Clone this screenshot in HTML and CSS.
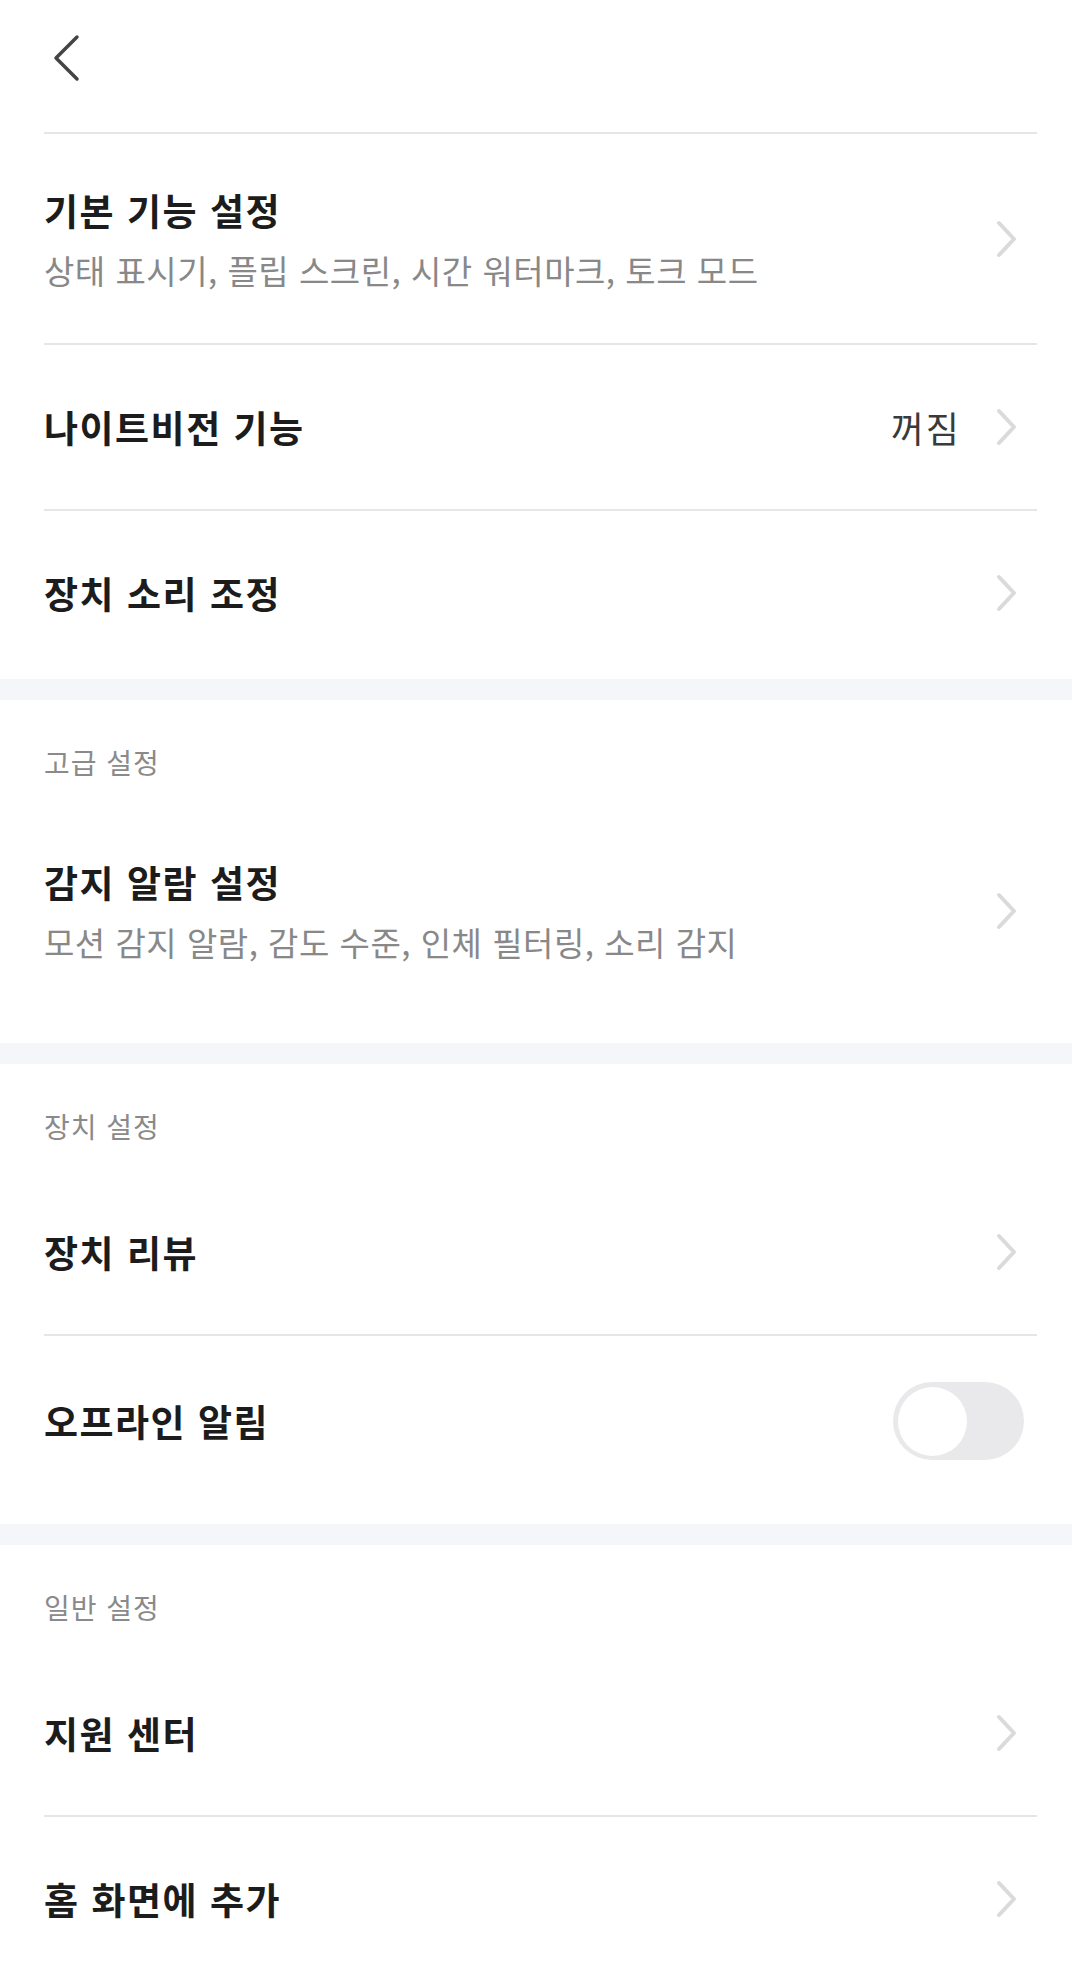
FILE: index.html
```html
<!DOCTYPE html>
<html lang="ko">

<head>
    <meta charset="UTF-8" />
    <meta name="viewport" content="width=device-width, initial-scale=1.0" />
    <title>설정</title>
    <link rel="stylesheet" href="styles.css">
</head>

<body>
    <div class="page">
        <!-- 상단 바 -->
        <div class="header">
            <svg class="back" width="30" height="50" viewBox="0 0 30 50">
                <path d="M25 3 L4 24 L25 45" />
            </svg>
        </div>

        <!-- 기본 -->
        <div class="section first">
            <div class="row double">
                <div class="text">
                    <div class="title">기본 기능 설정</div>
                    <div class="sub">상태 표시기, 플립 스크린, 시간 워터마크, 토크 모드</div>
                </div>
                <svg class="chevron" width="24" height="40" viewBox="0 0 24 40"><path d="M4 4 L19 20 L4 36" /></svg>
            </div>
            <div class="row">
                <div class="text">
                    <div class="title">나이트비전 기능</div>
                </div>
                <span class="value">꺼짐</span>
                <svg class="chevron" width="24" height="40" viewBox="0 0 24 40"><path d="M4 4 L19 20 L4 36" /></svg>
            </div>
            <div class="row">
                <div class="text">
                    <div class="title">장치 소리 조정</div>
                </div>
                <svg class="chevron" width="24" height="40" viewBox="0 0 24 40"><path d="M4 4 L19 20 L4 36" /></svg>
            </div>
        </div>

        <div class="band"></div>

        <!-- 고급 -->
        <div class="section">
            <div class="label">고급 설정</div>
            <div class="row double">
                <div class="text">
                    <div class="title">감지 알람 설정</div>
                    <div class="sub">모션 감지 알람, 감도 수준, 인체 필터링, 소리 감지</div>
                </div>
                <svg class="chevron" width="24" height="40" viewBox="0 0 24 40"><path d="M4 4 L19 20 L4 36" /></svg>
            </div>
        </div>

        <div class="band"></div>

        <!-- 장치 -->
        <div class="section">
            <div class="label">장치 설정</div>
            <div class="row">
                <div class="text">
                    <div class="title">장치 리뷰</div>
                </div>
                <svg class="chevron" width="24" height="40" viewBox="0 0 24 40"><path d="M4 4 L19 20 L4 36" /></svg>
            </div>
            <div class="row row-switch">
                <div class="text">
                    <div class="title">오프라인 알림</div>
                </div>
                <span class="switch"><span class="knob"></span></span>
            </div>
        </div>

        <div class="band"></div>

        <!-- 일반 -->
        <div class="section">
            <div class="label">일반 설정</div>
            <div class="row">
                <div class="text">
                    <div class="title">지원 센터</div>
                </div>
                <svg class="chevron" width="24" height="40" viewBox="0 0 24 40"><path d="M4 4 L19 20 L4 36" /></svg>
            </div>
            <div class="row">
                <div class="text">
                    <div class="title">홈 화면에 추가</div>
                </div>
                <svg class="chevron" width="24" height="40" viewBox="0 0 24 40"><path d="M4 4 L19 20 L4 36" /></svg>
            </div>
        </div>
    </div>
</body>

</html>
```

FILE: styles.css
```css
* {
    box-sizing: border-box;
}

body {
    font-family: "Noto Sans CJK KR", "Noto Sans", sans-serif;
    margin: 0;
    background: #fff;
    color: #1c1c1c;
}

.page {
    width: 1072px;
    background: #fff;
}

.header {
    height: 134px;
    margin: 0 35px 0 44px;
    border-bottom: 2px solid #e6e6e6;
    display: flex;
    align-items: flex-start;
    padding-top: 34px;
}

.back {
    margin-left: 8px;
}

.back path {
    fill: none;
    stroke: #444;
    stroke-width: 3.5;
    stroke-linecap: round;
    stroke-linejoin: round;
}

.section {
    padding: 0 35px 28px 44px;
}

.section.first {
    padding-bottom: 4px;
}

.band {
    height: 21px;
    background: #f5f6fa;
}

.label {
    font-size: 28px;
    letter-spacing: 1px;
    line-height: 40px;
    color: #8a8a8a;
    padding: 42px 0 24px;
}

.row {
    display: flex;
    align-items: center;
    min-height: 166px;
    border-bottom: 2px solid #e6e6e6;
}

.row:last-child {
    border-bottom: none;
    min-height: 164px;
}

.row.double {
    min-height: 211px;
}

.row.double:last-child {
    min-height: 209px;
}

.row-switch {
    padding-top: 10px;
}

.row.row-switch:last-child {
    min-height: 160px;
}

.text {
    flex: 1;
}

.title {
    font-size: 37px;
    font-weight: 700;
    letter-spacing: 1.5px;
    line-height: 48px;
    color: #1c1c1c;
}

.sub {
    font-size: 33px;
    letter-spacing: 0.5px;
    line-height: 44px;
    color: #888;
    margin-top: 14px;
}

.value {
    font-size: 36px;
    letter-spacing: 2px;
    color: #3a3a3a;
    margin-right: 34px;
}

.chevron {
    margin-right: 18px;
}

.chevron path {
    fill: none;
    stroke: #dadada;
    stroke-width: 4;
    stroke-linecap: round;
    stroke-linejoin: round;
}

.switch {
    width: 131px;
    height: 78px;
    border-radius: 39px;
    background: #e9e9eb;
    margin-right: 13px;
    display: flex;
    align-items: center;
    padding: 0 5px;
}

.knob {
    width: 69px;
    height: 69px;
    border-radius: 50%;
    background: #fff;
}
```
